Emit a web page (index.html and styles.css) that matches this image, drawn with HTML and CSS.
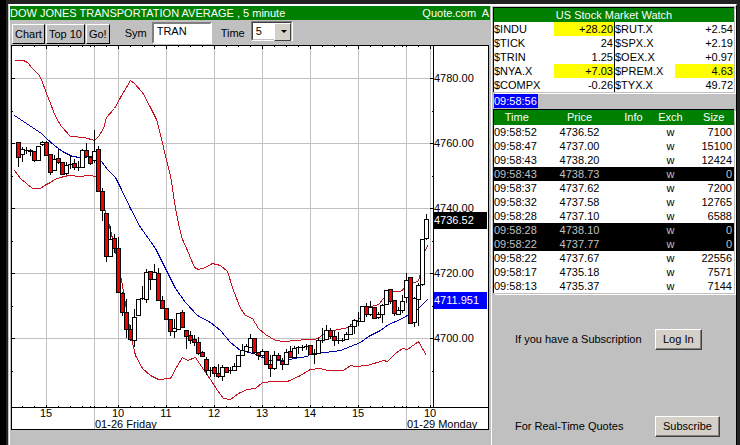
FILE: index.html
```html
<!DOCTYPE html>
<html lang="en">
<head>
<meta charset="utf-8">
<title>Dow Jones Transportation Average</title>
<link rel="stylesheet" href="styles.css">
</head>
<body>
<main class="window">
  <section class="chart-panel">
    <header class="titlebar"><h1>DOW JONES TRANSPORTATION AVERAGE , 5 minute</h1><span>Quote.com&nbsp; A</span></header>
    <form class="toolbar">
      <div class="tools">
        <button type="button" class="tool">Chart</button>
        <button type="button" class="tool">Top 10</button>
        <button type="button" class="tool">Go!</button>
      </div>
      <label for="symbol">Sym</label>
      <input id="symbol" class="symbol" type="text" value="TRAN">
      <label for="interval">Time</label>
      <span class="picker"><select id="interval"><option>5</option></select></span>
    </form>
    <svg id="chart" class="chart" viewBox="11 45 478 385" role="img" aria-label="Five minute candlestick chart"></svg>
  </section>
  <aside class="side">
    <section class="watch">
      <h2>US Stock Market Watch</h2>
      <div class="watch-tables">
        <table>
          <tr><th>$INDU</th><td class="hot">+28.20</td></tr>
          <tr><th>$TICK</th><td>24</td></tr>
          <tr><th>$TRIN</th><td>1.25</td></tr>
          <tr><th>$NYA.X</th><td class="hot">+7.03</td></tr>
          <tr><th>$COMPX</th><td>-0.26</td></tr>
        </table>
        <table>
          <tr><th>$RUT.X</th><td>+2.54</td></tr>
          <tr><th>$SPX.X</th><td>+2.19</td></tr>
          <tr><th>$OEX.X</th><td>+0.97</td></tr>
          <tr><th>$PREM.X</th><td class="hot">4.63</td></tr>
          <tr><th>$TYX.X</th><td>49.72</td></tr>
        </table>
      </div>
    </section>
    <div class="clock"><time>09:58:56</time></div>
    <table class="trades">
      <thead><tr><th class="time">Time</th><th class="price">Price</th><th class="info">Info</th><th class="exch">Exch</th><th class="size">Size</th></tr></thead>
      <tbody>
        <tr><td>09:58:52</td><td>4736.52</td><td></td><td>w</td><td>7100</td></tr>
        <tr><td>09:58:47</td><td>4737.00</td><td></td><td>w</td><td>15100</td></tr>
        <tr><td>09:58:43</td><td>4738.20</td><td></td><td>w</td><td>12424</td></tr>
        <tr class="dark"><td>09:58:43</td><td>4738.73</td><td></td><td>w</td><td>0</td></tr>
        <tr><td>09:58:37</td><td>4737.62</td><td></td><td>w</td><td>7200</td></tr>
        <tr><td>09:58:32</td><td>4737.58</td><td></td><td>w</td><td>12765</td></tr>
        <tr><td>09:58:28</td><td>4737.10</td><td></td><td>w</td><td>6588</td></tr>
        <tr class="dark"><td>09:58:28</td><td>4738.10</td><td></td><td>w</td><td>0</td></tr>
        <tr class="dark"><td>09:58:22</td><td>4737.77</td><td></td><td>w</td><td>0</td></tr>
        <tr><td>09:58:22</td><td>4737.67</td><td></td><td>w</td><td>22556</td></tr>
        <tr><td>09:58:17</td><td>4735.18</td><td></td><td>w</td><td>7571</td></tr>
        <tr><td>09:58:13</td><td>4735.37</td><td></td><td>w</td><td>7144</td></tr>
      </tbody>
    </table>
    <div class="account">
      <span>If you have a Subscription</span><button type="button">Log In</button>
      <span>For Real-Time Quotes</span><button type="button">Subscribe</button>
    </div>
  </aside>
</main>
<script src="chart.js"></script>
</body>
</html>
```
FILE: styles.css
```css
* { box-sizing: border-box; }
body {
  margin: 0;
  min-height: 100vh;
  display: flex;
  padding: 4px 3px 0 2px;
  border-left: 6px solid #000;
  background: #222;
  font: 11px/14px "Liberation Sans", Arial, sans-serif;
  color: #000;
}
h1, h2 { margin: 0; font: inherit; }
button, input, select { font: inherit; color: inherit; border-radius: 0; }
table { border-collapse: collapse; border-spacing: 0; }
th, td { padding: 0; font-weight: normal; height: 14px; }

.window {
  flex: 1;
  display: flex;
  background: #c0c0c0;
  border-top: 2px solid #fff;
  border-left: 1px solid #c0c0c0;
  border-right: 1px solid #000;
}
.chart-panel { flex: 1; min-width: 0; border-left: 1px solid #fff; }
.titlebar {
  display: flex;
  justify-content: space-between;
  background: #008000;
  color: #fff;
  padding-right: 1px;
  margin-right: 1px;
  white-space: nowrap;
  overflow: hidden;
}
.toolbar {
  display: flex;
  align-items: center;
  height: 25px;
  padding: 0 0 0 2px;
}
.tools { display: flex; gap: 1px; padding-top: 3px; margin-right: 15px; }
.tool {
  height: 20px;
  padding: 0 2px;
  background: #c0c0c0;
  border: 1px solid;
  border-color: #fff #000 #000 #fff;
}
.symbol {
  width: 60px;
  height: 22px;
  margin: 0 9px 0 5px;
  padding: 0 3px 4px;
  background: #fff;
  border: 2px solid;
  border-color: #808080 #fff #fff #808080;
}
.picker {
  position: relative;
  width: 42px;
  height: 20px;
  margin: 0 0 4px 6px;
  border: 1px solid;
  border-color: #808080 #fff #fff #808080;
}
.picker select {
  appearance: none;
  display: block;
  width: 100%;
  height: 18px;
  padding: 0 3px;
  border: 1px solid;
  border-color: #404040 #c0c0c0 #c0c0c0 #404040;
  background: #fff;
}
.picker::before {
  content: "";
  position: absolute;
  top: 1px;
  right: 1px;
  width: 15px;
  height: 16px;
  background: #d4d0c8;
  border: 1px solid;
  border-color: #fff #404040 #404040 #fff;
  pointer-events: none;
}
.picker::after {
  content: "";
  position: absolute;
  top: 8px;
  right: 5px;
  border: 3px solid transparent;
  border-top-color: #000;
  border-bottom: 0;
  pointer-events: none;
}
.chart { display: block; width: calc(100% - 3px); margin-left: 1px; height: auto; }
.chart text { font: 11px "Liberation Sans", Arial, sans-serif; }

.side {
  flex: 0 0 245px;
  border-left: 1px solid #fff;
  padding: 1px 2px 0 1px;
}
.watch {
  border: 1px solid #000;
  border-width: 1px 0 0 1px;
  box-shadow: 1px 1px #c0c0c0, 2px 2px #fff;
}
.watch h2 { background: #008000; color: #fff; text-align: center; }
.watch-tables { display: grid; grid-template-columns: 1fr 1fr; background: #fff; }
.watch-tables table { width: 100%; table-layout: fixed; border-collapse: separate; }
.watch-tables table + table { border-left: 1px solid #000; }
.watch-tables th { width: 60px; text-align: left; }
.watch-tables td { text-align: right; padding-right: 1px; }
.hot { background: #ff0; }
.clock { height: 17px; padding: 2px 0 0 1px; }
.clock time { display: block; width: 44px; background: #00f; color: #fff; }
.trades {
  width: 100%;
  table-layout: fixed;
  background: #fff;
  border: 1px solid #000;
  border-right: 0;
  border-bottom: 0;
  box-shadow: 1px 1px #c0c0c0, 2px 2px #fff;
}
.trades thead { background: #008000; color: #fff; }
.trades thead th { height: 15px; }
.time { width: 46px; }
.price { width: 80px; }
.info { width: 28px; }
.exch { width: 46px; }
.trades td:nth-child(2), .trades td:nth-child(4) { text-align: center; }
.trades td:last-child { text-align: right; padding-right: 2px; }
.dark { background: #000; color: #c0c0c0; }
.account {
  display: grid;
  grid-template-columns: 140px max-content;
  row-gap: 66px;
  align-items: center;
  justify-items: start;
  padding: 36px 0 8px 22px;
}
.account button {
  height: 21px;
  padding: 0 7px;
  background: #d4d0c8;
  border: 1px solid;
  border-color: #fff #404040 #404040 #fff;
  box-shadow: inset -1px -1px #808080;
}
```
FILE: chart.js
```js
const svg = document.getElementById("chart");
const el = (name, attrs, text) => {
  const node = document.createElementNS("http://www.w3.org/2000/svg", name);
  for (const key in attrs) node.setAttribute(key, attrs[key]);
  if (text) node.textContent = text;
  svg.appendChild(node);
};
const box = (x, y, width, height, fill) =>
  el("rect", { x, y, width, height, fill, "shape-rendering": "crispEdges" });
const line = (points, stroke) =>
  el("polyline", { points, stroke, fill: "none", transform: "translate(.5 .5)", "shape-rendering": "crispEdges" });

box(11, 45, 478, 385, "#000");
box(12, 46, 476, 383, "#fff");

const hours = [[46, "15"], [118, "10"], [166, "11"], [214, "12"], [262, "13"], [310, "14"], [358, "15"], [430, "10"]];
const levels = [[78, "4780.00"], [143, "4760.00"], [208, "4740.00"], [273, "4720.00"], [338, "4700.00"]];
for (const [x] of hours) box(x, 46, 1, 361, "#c0c0c0");
for (const x of [94, 406]) box(x, 46, 1, 383, "#c0c0c0");
for (const [y] of levels) box(12, y, 421, 1, "#c0c0c0");

// Bollinger bands and moving average
line("14,60 23,60 27,62 32,68 38,74 41,79 46,93 50,103 55,116 61,126 70,136 84,137 94,140 98,136 103,128 106,117 114,108 120,97 130,80 134,83 142,92 150,107 156,119 160,134 163,147 170,175 175,208 179,228 182,239 187,250 194,267 198,269 205,267 212,263 220,265 227,271 233,290 240,308 245,315 252,318 258,328 265,334 275,340 283,341 297,340 305,339 315,339 325,333 337,329 345,328 355,322 362,315 367,307 378,304 383,298 392,291 400,291 405,287 408,282 415,282 418,280 420,273 422,262 424,252 427,245", "#c8101c");
line("14,170 20,178 26,183 32,188 40,188 44,185 50,182 54,179 60,177 68,175 80,176 88,175 96,176 102,200 108,222 114,246 122,285 127,315 131,338 135,355 142,368 150,375 158,379 170,378 177,365 182,357 187,360 195,357 203,369 210,379 217,390 223,398 230,399 238,393 247,389 255,388 262,382 273,381 287,381 300,375 310,369 320,368 327,370 343,370 350,365 355,366 367,365 383,360 387,361 395,353 402,348 407,349 418,341 426,355", "#c8101c");
line("14,115 32,127 41,133 46,138 54,145 62,151 72,156 80,157 94,156 101,161 107,169 115,177 120,187 130,208 140,227 148,238 155,248 161,260 167,272 175,288 185,302 197,315 210,322 220,330 230,342 240,350 253,353 262,357 270,360 287,360 293,358 307,356 310,353 325,352 340,350 350,346 360,342 368,336 380,330 388,324 400,319 407,315 413,311 418,308 427,299", "#0000b0");

// One candle every four units: high, body top, body bottom, low, falling flag
const candles = [
  [142,142,157,166,1],[147,149,154,161,0],[147,150,150,153,0],[149,150,151,155,1],[151,151,160,161,1],
  [146,146,160,160,0],[141,142,144,145,0],[141,142,155,155,1],[154,154,172,174,1],[155,159,170,170,0],
  [149,158,162,163,1],[162,162,174,174,1],[162,165,173,174,0],[156,164,164,168,0],[159,163,167,169,1],
  [161,167,167,170,0],[149,150,167,167,0],[143,150,156,156,1],[156,157,163,164,1],[130,151,160,162,0],
  [146,149,191,191,1],[188,191,210,220,1],[213,213,256,261,1],[226,239,256,256,0],[234,238,248,252,1],
  [237,248,292,292,1],[292,293,312,315,1],[299,312,329,337,1],[325,329,339,340,1],[309,317,340,346,0],
  [299,299,315,315,0],[286,298,298,299,0],[269,272,299,302,0],[271,271,279,289,1],[264,272,279,279,0],
  [268,273,300,300,1],[296,300,308,308,1],[308,308,319,319,1],[319,319,331,335,1],[319,328,331,337,0],
  [313,313,329,329,0],[310,312,327,327,1],[330,330,336,348,1],[331,335,340,343,1],[335,339,342,345,1],
  [337,342,353,354,1],[351,352,356,356,1],[357,359,370,374,1],[367,370,370,376,0],[366,367,373,376,1],
  [364,373,376,377,1],[365,367,376,380,0],[367,367,372,372,1],[367,370,370,373,0],[363,366,370,370,0],
  [355,355,366,366,0],[344,350,355,355,0],[344,346,351,351,0],[334,338,347,347,0],[338,338,352,353,1],
  [352,352,355,359,1],[349,351,355,356,0],[351,351,364,364,1],[355,364,368,376,1],[351,355,368,369,0],
  [353,355,359,360,1],[358,361,364,369,1],[349,352,364,364,0],[346,351,357,357,1],[346,348,357,357,0],
  [346,347,347,353,0],[345,347,347,350,0],[344,346,346,349,0],[345,345,354,354,1],[349,354,354,363,0],
  [338,340,353,353,0],[328,340,340,342,0],[325,330,339,339,0],[328,330,336,338,1],[331,336,340,345,1],
  [332,340,340,343,0],[338,340,340,341,0],[332,334,339,339,0],[324,326,334,334,0],[319,320,326,333,0],
  [312,321,321,325,0],[306,306,321,321,0],[303,306,314,316,1],[301,307,314,315,0],[307,307,318,318,1],
  [312,314,317,318,0],[304,305,314,322,0],[290,290,304,304,0],[289,289,301,303,1],[300,300,313,315,1],
  [307,310,314,314,0],[295,301,310,312,0],[273,280,297,302,0],[277,277,323,323,1],[297,298,322,326,0],
  [283,285,299,325,0],[239,239,284,285,0],[214,219,238,239,0]
];
candles.forEach(([high, top, bottom, low, falling], i) => {
  const x = 18 + 4 * i;
  box(x, high, 1, low - high + 1, "#000");
  box(x - 2, top, 5, bottom - top + 1, "#000");
  if (bottom - top > 1) box(x - 1, top + 1, 3, bottom - top - 1, falling ? "#f00000" : "#fff");
});

// Axes and ticks
box(433, 46, 1, 361, "#000");
box(12, 407, 476, 1, "#000");
for (let x = 22; x < 432; x += 12) {
  box(x, 46, 1, 1, "#000");
  box(x, 406, 1, 1, "#000");
}
for (const x of [90, 402]) {
  box(x, 46, 1, 1, "#000");
  box(x, 406, 1, 1, "#000");
}
for (const [x, label] of hours) {
  box(x, 46, 1, 3, "#000");
  box(x, 405, 1, 2, "#000");
  el("text", { x, y: 417, "text-anchor": "middle" }, label);
}
for (const [y, label] of levels) {
  box(12, y, 3, 1, "#000");
  box(430, y, 3, 1, "#000");
  box(12, y + 33, 1, 1, "#000");
  box(432, y + 33, 1, 1, "#000");
  el("text", { x: 434, y: y + 4 }, label);
}
el("text", { x: 95, y: 428 }, "01-26 Friday");
el("text", { x: 407, y: 428 }, "01-29 Monday");
box(434, 212, 53, 17, "#000");
el("text", { x: 434, y: 224, fill: "#fff" }, "4736.52");
box(434, 292, 53, 17, "#00f");
el("text", { x: 434, y: 304, fill: "#fff" }, "4711.951");
```
